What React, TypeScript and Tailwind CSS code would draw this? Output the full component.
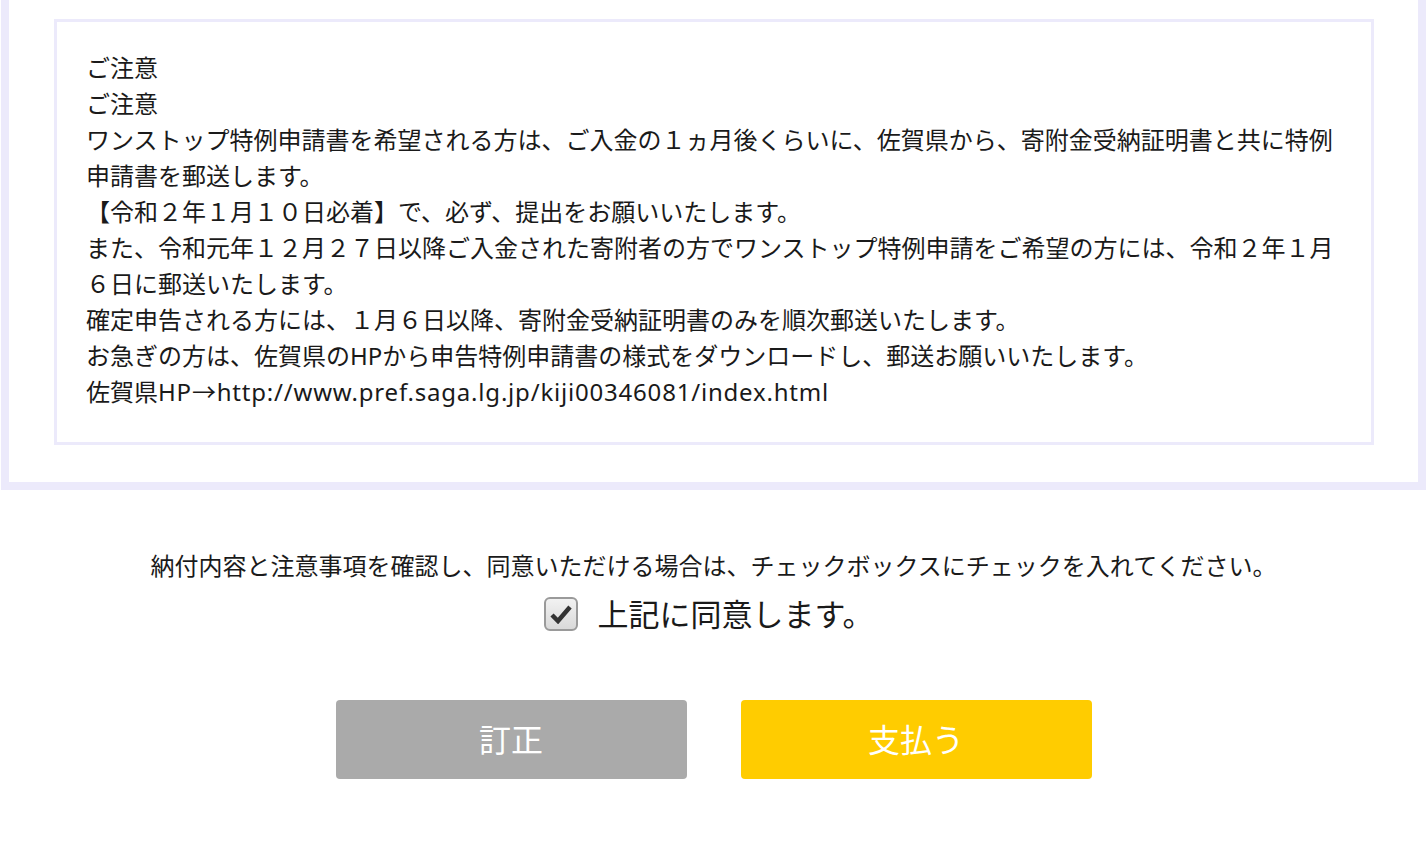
import React, { useState } from 'react';

const lines: React.ReactNode[] = [
  'ご注意',
  'ご注意',
  'ワンストップ特例申請書を希望される方は、ご入金の１ヵ月後くらいに、佐賀県から、寄附金受納証明書と共に特例申請書を郵送します。',
  '【令和２年１月１０日必着】で、必ず、提出をお願いいたします。',
  'また、令和元年１２月２７日以降ご入金された寄附者の方でワンストップ特例申請をご希望の方には、令和２年１月６日に郵送いたします。',
  '確定申告される方には、１月６日以降、寄附金受納証明書のみを順次郵送いたします。',
  'お急ぎの方は、佐賀県のHPから申告特例申請書の様式をダウンロードし、郵送お願いいたします。',
  <>
    佐賀県<span className="tracking-[0.8px]">HP→http://www.pref.saga.lg.jp/kiji00346081/index.html</span>
  </>,
];

const App: React.FC = () => {
  const [agreed, setAgreed] = useState(true);

  return (
    <div
      className="min-h-screen bg-white text-[#1a1a1a]"
      style={{ fontFamily: '"Noto Sans", "Noto Sans CJK JP", sans-serif' }}
    >
      {/* notice box */}
      <div className="ml-px w-[1425px] border-8 border-t-0 border-[#eceafb] pl-[45px] pr-[44px] pt-[19px] pb-[37px]">
        <div className="border-[3px] border-[#eceafb] pl-[29px] pr-[31px] pt-[28px] pb-[32px] text-[24px] leading-9">
          {lines.map((line, i) => (
            <p key={i}>{line}</p>
          ))}
        </div>
      </div>

      {/* agreement */}
      <div className="mt-[58px] flex flex-col items-center">
        <p className="text-[24px] leading-9">
          納付内容と注意事項を確認し、同意いただける場合は、チェックボックスにチェックを入れてください。
        </p>
        <label className="mt-2.5 flex cursor-pointer items-center gap-5 pr-2.5">
          <button
            type="button"
            onClick={() => setAgreed(!agreed)}
            className="flex h-[34px] w-[34px] items-center justify-center rounded-[6px] border-2 border-[#9a9a9a] bg-gradient-to-b from-[#f2f2f2] to-[#d9d9d9]"
          >
            {agreed && (
              <svg width="22" height="20" viewBox="0 0 22 20">
                <path d="M2 11 L8 17 L20 3" fill="none" stroke="#333" strokeWidth="4.5" strokeLinejoin="miter" />
              </svg>
            )}
          </button>
          <span className="text-[31px] leading-10">上記に同意します。</span>
        </label>
      </div>

      {/* buttons */}
      <div className="mt-[66px] flex justify-center gap-[54px]">
        <button className="flex h-[79px] w-[351px] items-center justify-center rounded bg-[#aaaaaa] text-[32px] text-white">
          訂正
        </button>
        <button className="flex h-[79px] w-[351px] items-center justify-center rounded bg-[#ffcc00] text-[32px] text-white">
          支払う
        </button>
      </div>
    </div>
  );
};

export default App;
